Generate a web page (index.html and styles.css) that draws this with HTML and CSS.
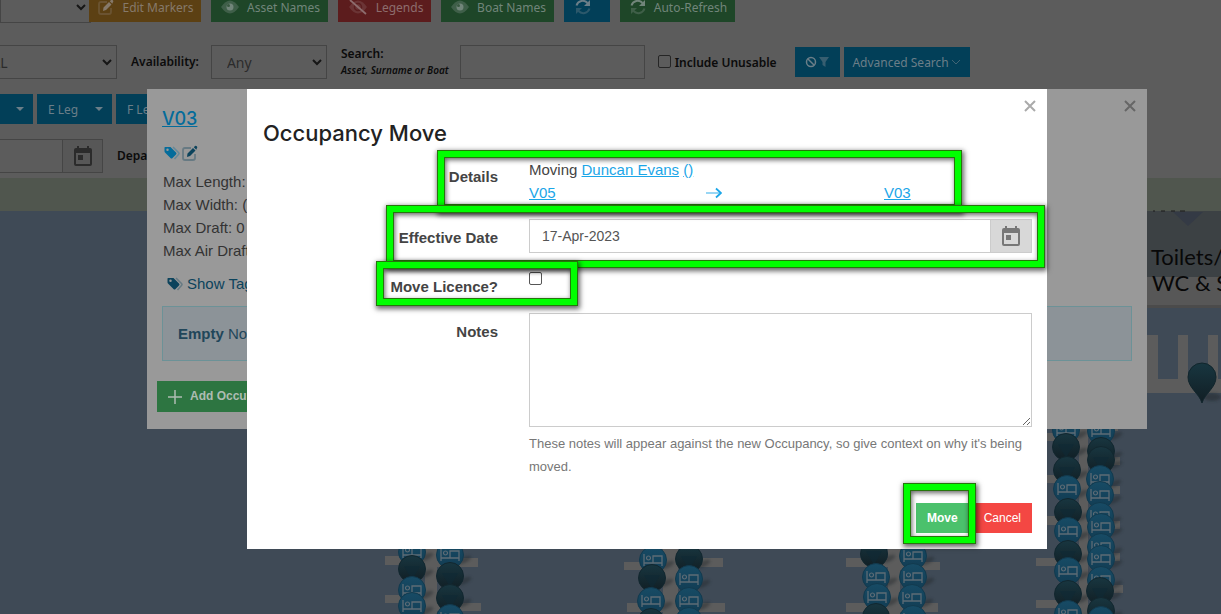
FILE: index.html
```html
<!DOCTYPE html>
<html lang="en">
<head>
<meta charset="utf-8">
<title>Occupancy Move</title>
<link rel="stylesheet" href="styles.css">
</head>
<body>
<svg class="defs" aria-hidden="true">
  <defs>
    <linearGradient id="darkFill" x1="0" y1="0" x2="0" y2="1"><stop offset="0" stop-color="#183640"/><stop offset="1" stop-color="#111e24"/></linearGradient>
    <linearGradient id="blueFill" x1="0" y1="0" x2="0" y2="1"><stop offset="0" stop-color="#174b65"/><stop offset="1" stop-color="#123c53"/></linearGradient>
    <filter id="soft" x="-30%" y="-60%" width="160%" height="220%"><feGaussianBlur stdDeviation="1.5"/></filter>
    <g id="shade"><ellipse cx="14" cy="5" rx="8" ry="3" transform="rotate(-25 14 5)" fill="#20262b" opacity=".45" filter="url(#soft)"/></g>
    <g id="dark"><use href="#shade"/><circle r="13.5" fill="url(#darkFill)" stroke="#12272f"/><path d="M-8-3 0 11 8-3Z" fill="#0f2a35" opacity=".6"/></g>
    <g id="blue"><use href="#shade"/><circle r="13.5" fill="url(#blueFill)" stroke="#123a4e"/><path d="M-9-6V6M-9 3H9M9 6V-4H0V3" fill="none" stroke="#5d6c76" stroke-width="1.3"/><circle cx="-4.5" cy="-2" r="2" fill="none" stroke="#5d6c76" stroke-width="1.2"/></g>
    <symbol id="calendar" viewBox="0 0 18 20"><path d="M2 2H3V0H5V2H13V0H15V2H16A2 2 0 0 1 18 4V18A2 2 0 0 1 16 20H2A2 2 0 0 1 0 18V4A2 2 0 0 1 2 2ZM2 7V18H16V7ZM4 9H9V14H4Z" fill="currentColor" fill-rule="evenodd"/></symbol>
    <symbol id="tags" viewBox="0 0 16 14"><path d="M9 1 14.5 6.5Q15.500 7.5 14.5 8.5L10.5 13" fill="none" stroke="currentColor" stroke-width="1.5" opacity=".35"/><path d="M1 1H6.5L12 6.5Q13 7.5 12 8.5L8.500 12Q7.500 13 6.500 12L1 6.500Q.5 6 .5 5V1.500ZM3.500 2.500A1.200 1.200 0 1 0 3.500 5 1.200 1.200 0 1 0 3.500 2.500Z" fill="currentColor" fill-rule="evenodd"/></symbol>
    <symbol id="edit" viewBox="0 0 16 16"><path d="M9 3H3Q1 3 1 5V13Q1 15 3 15H11Q13 15 13 13V9" fill="none" stroke="currentColor" stroke-width="1.8" opacity=".35"/><path d="M5 12 5.500 8.500 11 3 13.500 5.500 8 11ZM11.800 2.200 13 1Q13.800.3 14.800 1.200 15.800 2.200 15 3L14.300 4.700Z" fill="currentColor"/></symbol>
    <symbol id="eye" viewBox="0 0 18 14"><path d="M0 7Q9-6 18 7 9 20 0 7Z" fill="currentColor" opacity=".4"/><circle cx="9" cy="7" r="3.5" fill="currentColor"/><circle cx="7.500" cy="5.500" r="1.500" fill="#38573f"/></symbol>
    <symbol id="noeye" viewBox="0 0 20 16"><path d="M1 8Q10-5 19 8 10 21 1 8Z" fill="currentColor" opacity=".3"/><circle cx="10" cy="8" r="3.500" fill="none" stroke="#5a1d1e" stroke-width="1.500"/><path d="M2 1 18 15" stroke="currentColor" stroke-width="1.800"/></symbol>
    <symbol id="sync" viewBox="0 0 16 16"><path d="M1.500 6.500A6.500 6.500 0 0 1 12.500 4" fill="none" stroke="currentColor" stroke-width="2"/><path d="M15 1V7H9Z" fill="currentColor"/><g opacity=".4"><path d="M14.500 9.500A6.500 6.500 0 0 1 3.500 12" fill="none" stroke="currentColor" stroke-width="2"/><path d="M1 15V9H7Z" fill="currentColor"/></g></symbol>
  </defs>
</svg>
<div class="app">
  <main class="backdrop">
    <div class="bar bar-actions">
      <select class="field select-view" aria-label="View"><option></option></select>
      <button class="btn amber btn-edit"><svg width="16" height="16"><use href="#edit"/></svg>Edit Markers</button>
      <button class="btn green btn-assets"><svg width="18" height="14"><use href="#eye"/></svg>Asset Names</button>
      <button class="btn red btn-legends"><svg width="20" height="16"><use href="#noeye"/></svg>Legends</button>
      <button class="btn green btn-boats"><svg width="18" height="14"><use href="#eye"/></svg>Boat Names</button>
      <button class="btn blue btn-refresh" aria-label="Refresh"><svg width="16" height="16"><use href="#sync"/></svg></button>
      <button class="btn green btn-auto"><svg width="16" height="16"><use href="#sync"/></svg>Auto-Refresh</button>
    </div>
    <div class="bar bar-filter">
      <select class="field select-all" aria-label="Type"><option>ALL</option></select>
      <label class="name label-avail" for="avail">Availability:</label>
      <select class="field select-any" id="avail"><option>Any</option></select>
      <label class="name label-search" for="search">Search:<br><em>Asset, Surname or Boat</em></label>
      <input class="field input-search" id="search" type="text">
      <label class="name unusable"><input class="check" type="checkbox">Include Unusable</label>
      <button class="btn blue btn-clear" aria-label="Clear filter"><svg width="25" height="12" viewBox="0 0 25 12" fill="none" stroke="currentColor" stroke-width="1.5"><circle cx="6" cy="6" r="4.5"/><path d="M3 3 9 9"/><path d="M14 1H24L20.500 6V11L17.500 9V6Z" fill="currentColor" stroke="none" opacity=".5"/></svg></button>
      <button class="btn blue btn-adv">Advanced Search<svg width="10" height="8" viewBox="0 0 10 8" fill="none" stroke="currentColor" opacity=".6"><path d="M1 2 5 6 9 2"/></svg></button>
    </div>
    <div class="bar bar-legs">
      <button class="btn blue leg leg-first" aria-label="D Leg"><i class="caret"></i></button>
      <button class="btn blue leg">E Leg<i class="caret"></i></button>
      <button class="btn blue leg">F Leg<i class="caret"></i></button>
    </div>
    <div class="bar bar-dates">
      <input class="field input-arrive" type="text" aria-label="Arrival">
      <button class="field cal" aria-label="Pick arrival date"><svg width="18" height="20"><use href="#calendar"/></svg></button>
      <span class="name label-depart">Departure:</span>
    </div>
    <svg class="map" viewBox="0 178 1221 436" preserveAspectRatio="xMinYMin slice" role="img" aria-label="Marina map">
      <rect y="178" width="1221" height="436" fill="#3f4a56"/>
      <rect y="178" width="1221" height="33" fill="#50564e"/>
      <rect x="1047" y="211" width="174" height="66" fill="#3c4144"/>
      <rect x="1047" y="277" width="174" height="28" fill="#575757"/>
      <rect x="1047" y="305" width="174" height="3" fill="#4b4b4b"/>
      <path d="M1153 211H1155M1161 211H1165M1171 211H1175M1180 211H1185" stroke="#1a1a1a"/>
      <path d="M1173 212H1203L1188 226Z" fill="#343a45"/>
      <g class="map-text"><text x="1151" y="265">Toilets/</text><text x="1152" y="291">WC &amp; S</text></g>
      <path d="M1147 335H1158V379H1178V335H1188V379H1208V335H1218V379H1221V393H1147Z" fill="#5c5c5c"/>
      <ellipse cx="1212" cy="397" rx="9" ry="4" fill="#20262b" opacity=".5" filter="url(#soft)"/>
      <path d="M1202 403C1199 393 1188 388 1188 377A14 14 0 0 1 1216 377C1216 388 1205 393 1202 403Z" fill="url(#darkFill)" stroke="#11252c"/>
      <g fill="#5c5c5c">
        <path d="M425 549H437V614H425ZM663 549H678V614H663ZM888 549H900V614H888ZM1079 428H1088V614H1079Z"/>
        <path d="M385 556H425V565H385ZM437 558H478V567H437ZM385 595H425V603H385ZM437 603H481V611H437Z"/>
        <path d="M624 562H663V570H624ZM678 558H723V567H678ZM627 603H725V612H627Z"/>
        <path d="M846 558H888V567H846ZM900 562H940V570H900ZM846 603H938V612H846Z"/>
        <path d="M1047 433H1079V441H1047ZM1047 475H1079V483H1047ZM1047 516H1079V525H1047ZM1036 558H1079V566H1036ZM1036 600H1079V608H1036Z"/>
        <path d="M1088 428H1118V431H1088ZM1088 457H1120V465H1088ZM1088 486H1120V494H1088ZM1088 521H1120V529H1088ZM1088 553H1120V561H1088ZM1088 585H1123V593H1088Z"/>
      </g>
      <g>
        <use href="#blue" x="412" y="552"/><use href="#dark" x="412" y="569"/><use href="#blue" x="412" y="590"/><use href="#blue" x="412" y="606"/>
        <use href="#blue" x="450" y="555"/><use href="#dark" x="450" y="576"/><use href="#dark" x="450" y="598"/><use href="#blue" x="450" y="618"/>
        <use href="#blue" x="653" y="560"/><use href="#dark" x="652" y="578"/><use href="#blue" x="651" y="601"/><use href="#dark" x="651" y="622"/>
        <use href="#dark" x="689" y="559"/><use href="#blue" x="689" y="579"/><use href="#blue" x="689" y="601"/><use href="#blue" x="689" y="621"/>
        <use href="#dark" x="874" y="554"/><use href="#blue" x="876" y="577"/><use href="#blue" x="877" y="597"/><use href="#dark" x="876" y="617"/>
        <use href="#blue" x="913" y="556"/><use href="#blue" x="913" y="577"/><use href="#blue" x="912" y="598"/><use href="#blue" x="913" y="619"/>
        <use href="#blue" x="1066" y="430"/><use href="#dark" x="1066" y="447"/><use href="#dark" x="1067" y="470"/><use href="#blue" x="1067" y="489"/><use href="#dark" x="1068" y="512"/><use href="#blue" x="1068" y="531"/><use href="#dark" x="1068" y="554"/><use href="#blue" x="1068" y="571"/><use href="#dark" x="1068" y="594"/><use href="#blue" x="1068" y="614"/>
        <use href="#blue" x="1101" y="431"/><use href="#dark" x="1101" y="451"/><use href="#dark" x="1101" y="460"/><use href="#blue" x="1100" y="479"/><use href="#blue" x="1100" y="495"/><use href="#blue" x="1100" y="516"/><use href="#blue" x="1101" y="527"/><use href="#blue" x="1101" y="547"/><use href="#blue" x="1101" y="559"/><use href="#blue" x="1101" y="580"/><use href="#dark" x="1100" y="591"/><use href="#dark" x="1101" y="611"/><use href="#blue" x="1101" y="620"/>
      </g>
    </svg>
  </main>

  <div class="layer">
    <section class="panel" aria-label="V03">
      <button class="close" aria-label="Close panel"><svg width="12" height="12" viewBox="0 0 12 12"><path d="M1 1 11 11M11 1 1 11"/></svg></button>
      <h2 class="panel-title"><a href="#">V03</a></h2>
      <div class="panel-icons"><svg width="16" height="14"><use href="#tags"/></svg><svg class="pen" width="16" height="16"><use href="#edit"/></svg></div>
      <p class="specs">Max Length:<br>Max Width: (<br>Max Draft: 0<br>Max Air Draft:</p>
      <a class="show-tags" href="#"><svg width="16" height="14"><use href="#tags"/></svg>Show Tags</a>
      <p class="notice"><b>Empty</b> No</p>
      <button class="btn add"><svg width="14" height="14" viewBox="0 0 14 14"><path d="M7 0V14M0 7H14" stroke="currentColor" stroke-width="1.5"/></svg>Add Occupancy</button>
    </section>
  </div>

  <div class="layer">
    <form class="modal" role="dialog" aria-labelledby="heading">
      <button class="close" type="button" aria-label="Close"><svg width="12" height="12" viewBox="0 0 12 12"><path d="M1 1 11 11M11 1 1 11"/></svg></button>
      <h1 class="heading" id="heading">Occupancy Move</h1>
      <div class="row row-details">
        <span class="label">Details</span>
        <div class="details">
          <p>Moving <a href="#">Duncan Evans</a> <a href="#">()</a></p>
          <div class="route"><a href="#">V05</a><svg width="16" height="12" viewBox="0 0 16 12" fill="none" stroke="#1ba6e8" stroke-width="1.8"><path d="M0 6H14" opacity=".5"/><path d="M10 1.500 15 6 10 10.500"/></svg><a class="route-to" href="#">V03</a></div>
        </div>
      </div>
      <div class="row row-date">
        <label class="label" for="date">Effective Date</label>
        <div class="date"><input id="date" type="text" value="17-Apr-2023"><button class="pick" type="button" aria-label="Pick date"><svg width="18" height="20"><use href="#calendar"/></svg></button></div>
      </div>
      <div class="row row-licence">
        <label class="label" for="licence">Move Licence?</label>
        <input class="check" id="licence" type="checkbox">
      </div>
      <div class="row row-notes">
        <label class="label" for="notes">Notes</label>
        <div><textarea id="notes"></textarea><p class="help">These notes will appear against the new Occupancy, so give context on why it's being moved.</p></div>
      </div>
      <div class="actions"><button class="action go" type="button">Move</button><button class="action cancel" type="button">Cancel</button></div>
      <i class="ring ring-details"></i>
      <i class="ring ring-date"></i>
      <i class="ring ring-licence"></i>
      <i class="ring ring-move"></i>
    </form>
  </div>
</div>
</body>
</html>
```

FILE: styles.css
```css
* { box-sizing: border-box; }
body { margin: 0; font-family: "Liberation Sans", Arial, sans-serif; }
h1, h2, p { margin: 0; font-weight: 400; }
button, input, select, textarea { font: inherit; margin: 0; border-radius: 0; }
svg { display: block; flex: none; }
.defs { position: absolute; width: 0; height: 0; }

.app { position: relative; height: 100vh; overflow: hidden; background: #5c5c5c; }
.backdrop { display: flex; flex-direction: column; height: 100%; font-family: "Noto Sans", sans-serif; font-size: 12px; color: #0b0b0b; }
.bar { display: flex; align-items: center; flex: none; white-space: nowrap; }
.bar > * { flex: none; }
.bar-actions { height: 31px; margin-top: -8px; gap: 10px; align-items: flex-start; }
.bar-filter { height: 34px; margin-top: 22px; }
.bar-legs { gap: 4px; margin-top: 15px; }
.bar-dates { margin: 15px 0 5px; }
.map { flex: 1; min-height: 0; width: 100%; }
.map-text { font-family: Lato, sans-serif; font-size: 22px; fill: #080808; }

.btn { display: flex; align-items: center; justify-content: center; height: 30px; padding: 0 10px; border: 0; color: #747b7e; white-space: nowrap; }
.btn svg { margin-right: 8px; }
.bar-actions .btn { padding: 0 9px 0 11px; }
.amber { background: #5c4013; color: #86796a; }
.green { background: #1e4628; color: #71857a; }
.red { background: #5c1c1d; color: #8d6c6d; }
.blue { background: #023f58; color: #6b7e88; }
.btn-edit { width: 112px; margin-left: -12px; }
.btn-assets { width: 117px; }
.btn-legends { width: 93px; }
.btn-boats { width: 113px; }
.btn-refresh { width: 46px; }
.btn-auto { width: 115px; }
.bar .btn-refresh { padding: 0 20px 0 11px; }
.btn-refresh svg, .btn-clear svg { margin: 0; }
.btn-clear { width: 45px; margin-left: 18px; }
.btn-adv { width: 126px; margin-left: 4px; }
.btn-adv svg { margin: 0 0 0 2px; }
.leg { width: 75px; justify-content: space-between; padding: 0 9px 0 11px; }
.leg-first { width: 33px; justify-content: flex-end; }
.caret { border: 4px solid transparent; border-top-color: currentColor; border-bottom: 0; }

.field { height: 34px; border: 1px solid #454545; background: transparent; color: #2b2b2b; font-size: 14px; }
select.field { appearance: none; background: url("data:image/svg+xml,%3Csvg xmlns='http://www.w3.org/2000/svg' width='10' height='7'%3E%3Cpath d='M1 1 5 5 9 1' fill='none' stroke='%23161616' stroke-width='2'/%3E%3C/svg%3E") no-repeat right 4px center; }
.select-view { width: 91px; height: 31px; }
.select-all { width: 117px; margin-left: 0; border-left: 0; text-indent: -16px; }
.select-any { width: 116px; margin-left: 12px; padding-left: 15px; }
.name { font-weight: 600; line-height: 16px; }
.label-avail { margin-left: 14px; }
.label-search { margin-left: 14px; }
.label-search em { font-size: 10px; }
.input-search { width: 185px; margin-left: 11px; }
.check { appearance: none; width: 13px; height: 13px; border: 1px solid #555; border-radius: 2px; }
.unusable { display: flex; gap: 4px; margin-left: 13px; padding-top: 2px; }
.unusable .check { border-color: #262626; }
.input-arrive { width: 62px; border-left: 0; border-right: 0; }
.cal { width: 41px; padding: 0; display: grid; place-items: center; background: #575757; }
.label-depart { margin-left: 14px; }

.layer { position: absolute; inset: 89px 0 0 73px; display: flex; justify-content: center; align-items: flex-start; pointer-events: none; }
.layer > * { pointer-events: auto; }
.close { position: absolute; top: 11px; right: 11px; padding: 0; border: 0; background: none; }
.close path { stroke: #aaa; stroke-width: 2; }

.panel { position: relative; width: min(1000px, 100%); padding: 18px 15px 17px; background: #999; color: #333; font-size: 15px; line-height: 23px; }
.panel .close path { stroke: #666; }
.panel-title { font-family: Inter, sans-serif; font-size: 18px; font-weight: 500; line-height: 24px; }
.panel-title a { color: #046c9b; }
.panel-icons { display: flex; align-items: center; gap: 2px; height: 16px; margin: 14px 0 9px 2px; color: #046c9b; }
.pen { color: #0c435c; }
.specs { padding-left: 1px; }
.show-tags { display: flex; align-items: center; gap: 4px; width: max-content; margin: 10px 0 11px 5px; color: #0c435c; text-decoration: none; }
.notice { padding: 15px; border: 1px solid #6c9297; background: #8c9398; color: #21465a; }
.add { height: 31px; margin: 20px 0 0 -5px; padding: 0 11px; background: #2d7541; color: #aebcb2; font-size: 12px; font-weight: 700; }

.modal { position: relative; width: min(800px, 100%); padding: 32px 15px 16px 16px; background: #fff; color: #444; font-size: 15px; line-height: 23px; }
.modal a { color: #1ba6e8; }
.heading { font-family: Inter, sans-serif; font-size: 22px; font-weight: 500; line-height: 24px; color: #222; }
.row { display: grid; grid-template-columns: 235fr 503fr; gap: 31px; }
.row > * { min-width: 0; }
.label { text-align: right; font-weight: 700; }
.row-details { margin-top: 13px; }
.row-details .label { padding-top: 7px; }
.route { display: grid; grid-template-columns: 177fr 178fr 148fr; align-items: center; }
.row-date { margin-top: 15px; }
.row-date .label { padding-top: 7px; }
.date { display: flex; height: 34px; border: 1px solid #ccc; }
.date input { flex: 1; min-width: 0; border: 0; padding: 0 12px; color: #555; font-size: 14px; }
.pick { width: 41px; padding: 0; border: 0; border-left: 1px solid #ccc; background: #d8d8d8; color: #777; display: grid; place-items: center; }
.row-licence { margin-top: 19px; }
.row-licence .label { padding-top: 3px; }
.row-notes { margin-top: 15px; }
.row-notes .label { padding-top: 7px; }
textarea { display: block; width: 100%; height: 114px; border: 1px solid #ccc; resize: vertical; }
.help { margin-top: 5px; color: #777; font-size: 13px; }
.actions { display: flex; justify-content: flex-end; gap: 4px; margin-top: 25px; }
.action { height: 30px; padding: 0 11px; border: 0; color: #fff; font-size: 12px; }
.go { background: #4bc16c; font-weight: 700; }
.cancel { background: #f44743; }

.ring { position: absolute; border: 6px solid #0f0; outline: 1px solid #26750c; box-shadow: inset 0 0 0 1px #26750c, inset 1px 2px 5px 1px rgba(0, 0, 0, .6), 1px 2px 5px 2px rgba(0, 0, 0, .6); pointer-events: none; }
.ring-details { left: 191px; top: 62px; width: 523px; height: 60px; }
.ring-date { left: 140px; top: 117px; width: 657px; height: 61px; }
.ring-licence { left: 130px; top: 173px; width: 200px; height: 43px; }
.ring-move { left: 657px; top: 395px; width: 71px; height: 59px; }
```
